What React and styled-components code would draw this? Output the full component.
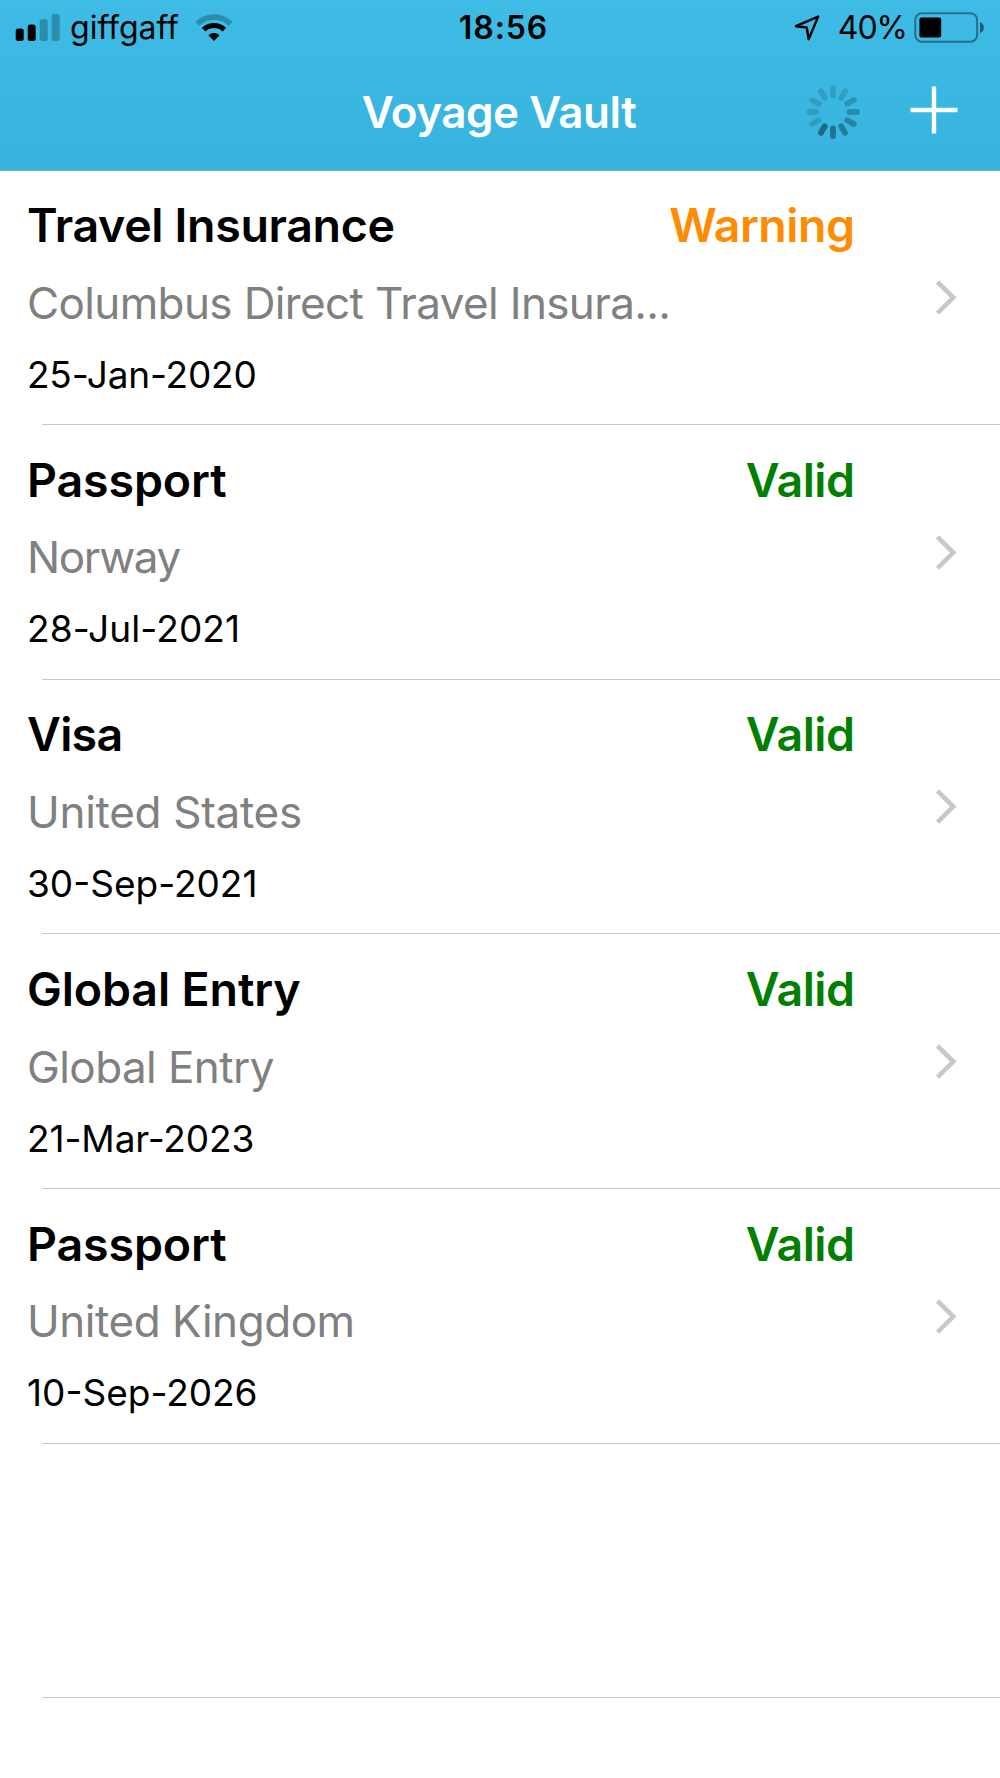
import React from "react";
import styled, { createGlobalStyle } from "styled-components";

const GlobalStyle = createGlobalStyle`
    body {
        margin: 0;
        background-color: #ffffff;
        font-family: Inter, "Liberation Sans", sans-serif;
    }
`;
const Screen = styled.div`
    width: 1000px;
    height: 1778px;
    overflow: hidden;
    background-color: #ffffff;
`;
const Header = styled.header`
    box-sizing: border-box;
    height: 171px;
    background: linear-gradient(#3ebce5, #36b4df);
    border-bottom: 1px solid #7fb0c4;
`;
const StatusBar = styled.div`
    display: grid;
    grid-template-columns: 1fr auto 1fr;
    align-items: center;
    height: 54px;
    box-sizing: border-box;
    padding: 0 14px 0 15px;
    color: #000000;
`;
const StatusGroup = styled.div`
    display: flex;
    align-items: center;
    justify-content: ${(props) => (props.$end ? "flex-end" : "flex-start")};
`;
const StatusText = styled.span`
    padding-top: 1px;
    font-size: 32px;
    font-weight: 400;
    letter-spacing: ${(props) => props.$spacing || "0"};
    line-height: 54px;
    white-space: nowrap;
`;
const Clock = styled(StatusText)`
    padding-left: 6px;
    font-weight: 600;
`;
const StatusIcon = styled.svg`
    display: block;
    flex: none;
    margin-left: ${(props) => props.$left || "0"};
    margin-right: ${(props) => props.$right || "0"};
`;
const NavBar = styled.div`
    display: grid;
    grid-template-columns: 1fr auto 1fr;
    align-items: center;
    height: 116px;
`;
const NavTitle = styled.h1`
    grid-column: 2;
    margin: 0;
    padding-right: 2px;
    color: #ffffff;
    font-size: 44px;
    font-weight: 600;
    letter-spacing: -0.48px;
    line-height: 116px;
`;
const NavActions = styled.div`
    display: flex;
    align-items: center;
    justify-content: flex-end;
    padding-right: 42.5px;
`;
const IconButton = styled.button`
    display: block;
    margin: 0 0 1px 49.5px;
    padding: 0;
    border: none;
    background-color: transparent;
    cursor: pointer;
`;
const DocumentList = styled.ul`
    margin: -0.7px 0 0;
    padding: 0;
    list-style: none;
`;
// The separator starts a little further in than the text
const Row = styled.li`
    box-sizing: border-box;
    height: 254.67px;
    padding: 24.8px 42px 0 27px;
    display: grid;
    grid-template-columns: 1fr 22px;
    column-gap: 80px;
    background: linear-gradient(#c8c7cc, #c8c7cc) 42px 100% / 100% 1px no-repeat;
`;
const Details = styled.div`
    min-width: 0;
`;
const TitleLine = styled.div`
    display: flex;
    justify-content: space-between;
    height: 60px;
`;
const Title = styled.h2`
    margin: 0;
    color: #000000;
    font-size: 46.5px;
    font-weight: 600;
    letter-spacing: ${(props) => props.$spacing}px;
    line-height: 60px;
`;
const Status = styled.span`
    color: ${(props) => (props.$warning ? "#ff8c00" : "#007f00")};
    font-size: 46.5px;
    font-weight: 600;
    letter-spacing: -0.5px;
    line-height: 60px;
    margin-right: 1.5px;
`;
const Subtitle = styled.div`
    margin-top: 18.5px;
    width: 680px;
    color: #808080;
    font-size: 44px;
    letter-spacing: ${(props) => props.$spacing}px;
    line-height: 58px;
    white-space: nowrap;
`;
const Expiry = styled.div`
    margin-top: 18.2px;
    color: #000000;
    font-size: 37px;
    letter-spacing: ${(props) => props.$spacing}px;
    line-height: 50px;
`;
const Chevron = styled.svg`
    display: block;
    margin-top: 84px;
`;

// tracking: letter spacing of the title, the issuer and the date
const documents = [
    {
        title: "Travel Insurance",
        issuer: "Columbus Direct Travel Insura...",
        expiry: "25-Jan-2020",
        status: "Warning",
        tracking: [-0.33, -0.63, -0.2],
    },
    {
        title: "Passport",
        issuer: "Norway",
        expiry: "28-Jul-2021",
        status: "Valid",
        tracking: [-0.12, -1.4, 0.1],
    },
    {
        title: "Visa",
        issuer: "United States",
        expiry: "30-Sep-2021",
        status: "Valid",
        tracking: [-0.7, -0.3, 0],
    },
    {
        title: "Global Entry",
        issuer: "Global Entry",
        expiry: "21-Mar-2023",
        status: "Valid",
        tracking: [-0.12, -0.58, -0.1],
    },
    {
        title: "Passport",
        issuer: "United Kingdom",
        expiry: "10-Sep-2026",
        status: "Valid",
        tracking: [-0.12, -0.46, 0],
    },
];

// Opacity of each spoke, clockwise from the top
const spokes = [0.17, 0.17, 0.24, 0.3, 0.36, 0.42, 0.48, 0.54, 0.17, 0.17, 0.17, 0.17];

const SignalIcon = () => (
    <StatusIcon width="46" height="28" viewBox="0 0 46 28" $right="9px">
        <rect x="0.7" y="14.5" width="8" height="12.5" rx="2.5" />
        <rect x="12.7" y="10.5" width="8" height="16.5" rx="2.5" />
        <rect x="24.7" y="5" width="8" height="22" rx="2.5" opacity="0.25" />
        <rect x="36.7" y="0" width="8" height="27" rx="2.5" opacity="0.25" />
    </StatusIcon>
);

const WifiIcon = () => (
    <StatusIcon width="38" height="28" viewBox="0 0 38 28" $left="16px">
        <path d="M2.3 9.8 A24 24 0 0 1 35.7 9.8" fill="none" stroke="#000" strokeWidth="5.4" opacity="0.25" />
        <path d="M8.6 15.6 A15 15 0 0 1 29.4 15.6" fill="none" stroke="#000" strokeWidth="5" />
        <path d="M19 27 L13.4 21.3 A8 8 0 0 1 24.6 21.3 Z" />
    </StatusIcon>
);

const LocationIcon = () => (
    <StatusIcon width="26" height="26" viewBox="0 0 26 26" $right="18px">
        <path
            d="M2 11.2 L24.2 1.6 L14.6 24.2 L12.8 12.5 Z"
            fill="none"
            stroke="#000"
            strokeWidth="2.4"
            strokeLinejoin="round"
        />
    </StatusIcon>
);

const BatteryIcon = () => (
    <StatusIcon width="72" height="32" viewBox="0 0 72 32" $left="7px">
        <rect x="1.3" y="1.3" width="61.8" height="28.4" rx="6.5" fill="none" stroke="#000" strokeOpacity="0.4" strokeWidth="2" />
        <rect x="5.4" y="5.5" width="21.8" height="20" rx="2" />
        <path d="M66 10 C71.3 12.5 71.3 18.7 66 21.2 Z" opacity="0.5" />
    </StatusIcon>
);

const Spinner = () => (
    <svg width="54" height="54" viewBox="-27 -27 54 54">
        {spokes.map((opacity, i) => (
            <line
                key={i}
                y1="-16.5"
                y2="-24"
                stroke="#0a2a38"
                strokeWidth="5.8"
                strokeLinecap="round"
                opacity={opacity}
                transform={`rotate(${i * 30})`}
            />
        ))}
    </svg>
);

const DocumentRow = ({ document }) => {
    const [titleSpacing, issuerSpacing, expirySpacing] = document.tracking;

    return (
        <Row>
            <Details>
                <TitleLine>
                    <Title $spacing={titleSpacing}>{document.title}</Title>
                    <Status $warning={document.status === "Warning"}>{document.status}</Status>
                </TitleLine>
                <Subtitle $spacing={issuerSpacing}>{document.issuer}</Subtitle>
                <Expiry $spacing={expirySpacing}>{document.expiry}</Expiry>
            </Details>
            <Chevron width="22" height="38" viewBox="0 0 22 38">
                <path d="M1.5 3 L17.3 18.6 L1.5 34.2" fill="none" stroke="#c7c7cc" strokeWidth="4.6" />
            </Chevron>
        </Row>
    );
};

const App = () => {
    return (
        <Screen>
            <GlobalStyle />
            <Header>
                <StatusBar>
                    <StatusGroup>
                        <SignalIcon />
                        <StatusText>giffgaff</StatusText>
                        <WifiIcon />
                    </StatusGroup>
                    <Clock $spacing="0.9px">18:56</Clock>
                    <StatusGroup $end>
                        <LocationIcon />
                        <StatusText $spacing="-1px">40%</StatusText>
                        <BatteryIcon />
                    </StatusGroup>
                </StatusBar>
                <NavBar>
                    <NavTitle>Voyage Vault</NavTitle>
                    <NavActions>
                        <Spinner />
                        <IconButton aria-label="Add document">
                            <svg width="48" height="48" viewBox="0 0 48 48">
                                <path d="M24 0.5 V47.5 M0.5 24 H47.5" stroke="#ffffff" strokeWidth="4.4" />
                            </svg>
                        </IconButton>
                    </NavActions>
                </NavBar>
            </Header>
            <DocumentList>
                {documents.map((document) => (
                    <DocumentRow key={document.expiry} document={document} />
                ))}
                <Row />
            </DocumentList>
        </Screen>
    );
};

export default App;
